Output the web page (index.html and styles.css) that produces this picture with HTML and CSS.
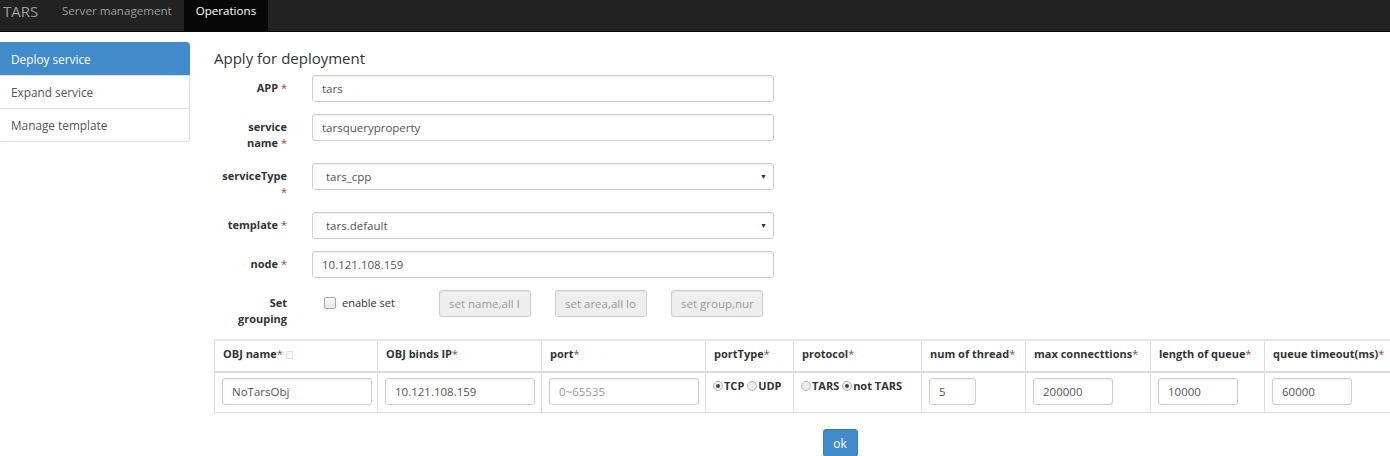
FILE: index.html
```html
<!DOCTYPE html>
<html>
<head>
<meta charset="utf-8">
<link rel="stylesheet" href="styles.css">
</head>
<body>
<div class="navbar">
  <span class="brand">TARS</span>
  <a class="nav-item">Server management</a>
  <a class="nav-item active">Operations</a>
</div>
<div class="main">
  <div class="sidebar">
    <div class="list-item active">Deploy service</div>
    <div class="list-item">Expand service</div>
    <div class="list-item">Manage template</div>
  </div>
  <div class="content">
    <h3 class="title">Apply for deployment</h3>
    <div class="form-row">
      <label class="label">APP <span class="req">*</span></label>
      <div class="field"><div class="input">tars</div></div>
    </div>
    <div class="form-row">
      <label class="label">service<br>name <span class="req">*</span></label>
      <div class="field"><div class="input">tarsqueryproperty</div></div>
    </div>
    <div class="form-row">
      <label class="label">serviceType<br><span class="req">*</span></label>
      <div class="field"><div class="input select">tars_cpp<span class="caret">▼</span></div></div>
    </div>
    <div class="form-row">
      <label class="label">template <span class="req">*</span></label>
      <div class="field"><div class="input select">tars.default<span class="caret">▼</span></div></div>
    </div>
    <div class="form-row">
      <label class="label">node <span class="req">*</span></label>
      <div class="field"><div class="input">10.121.108.159</div></div>
    </div>
    <div class="form-row">
      <label class="label">Set<br>grouping</label>
      <div class="field set-field">
        <span class="check-wrap"><span class="checkbox"></span>enable set</span>
        <div class="input disabled">set name,all l</div>
        <div class="input disabled">set area,all lo</div>
        <div class="input disabled">set group,nur</div>
      </div>
    </div>
    <div class="table-wrap">
      <table class="obj-table">
        <colgroup>
          <col style="width:163px"><col style="width:164px"><col style="width:164px"><col style="width:88px"><col style="width:128px"><col style="width:104px"><col style="width:125px"><col style="width:114px"><col style="width:202px">
        </colgroup>
        <thead>
          <tr>
            <th>OBJ name<span class="req">*</span> <span class="tiny-box"></span></th>
            <th>OBJ binds IP<span class="req">*</span></th>
            <th>port<span class="req">*</span></th>
            <th>portType<span class="req">*</span></th>
            <th>protocol<span class="req">*</span></th>
            <th>num of thread<span class="req">*</span></th>
            <th>max connecttions<span class="req">*</span></th>
            <th>length of queue<span class="req">*</span></th>
            <th>queue timeout(ms)<span class="req">*</span></th>
          </tr>
        </thead>
        <tbody>
          <tr>
            <td><div class="input cell-wide">NoTarsObj</div></td>
            <td><div class="input cell-wide">10.121.108.159</div></td>
            <td><div class="input cell-wide placeholder">0~65535</div></td>
            <td class="radio-cell"><span class="radio on"></span><b>TCP</b> <span class="radio"></span><b>UDP</b></td>
            <td class="radio-cell"><span class="radio"></span><b>TARS</b> <span class="radio on"></span><b>not TARS</b></td>
            <td><div class="input cell-xs">5</div></td>
            <td><div class="input cell-sm">200000</div></td>
            <td><div class="input cell-sm">10000</div></td>
            <td><div class="input cell-sm">60000</div></td>
          </tr>
        </tbody>
      </table>
      <div class="actions"><button class="btn-ok">ok</button></div>
    </div>
  </div>
</div>
</body>
</html>
```
FILE: styles.css
```css
html, body {
  margin: 0;
  padding: 0;
  overflow: hidden;
}
body {
  font-family: "Open Sans", "Noto Sans", sans-serif;
  font-size: 11px;
  color: #333;
  background: #fff;
  width: 1390px;
  height: 456px;
}
.navbar {
  height: 31px;
  background: #222;
  border-bottom: 1px solid #080808;
  display: flex;
  align-items: stretch;
}
.brand {
  font-size: 15px;
  line-height: 18px;
  color: #9d9d9d;
  padding: 2px 12px 0 3px;
  width: 35px;
  flex: 0 0 35px;
}
.nav-item {
  display: block;
  padding: 3px 12px 0;
  line-height: 16px;
  color: #9d9d9d;
  font-size: 11.6px;
}
.nav-item.active {
  background: #080808;
  color: #fff;
}
.main {
  display: flex;
  gap: 24px;
}
.sidebar {
  flex: 0 0 189px;
  width: 189px;
  margin-top: 10px;
  align-self: flex-start;
  border: 1px solid #ddd;
  border-left: none;
  border-radius: 0 4px 4px 0;
}
.list-item {
  height: 32px;
  line-height: 33px;
  padding-left: 11px;
  font-size: 11.8px;
  color: #555;
  border-top: 1px solid #ddd;
}
.list-item:first-child {
  border-top: none;
}
.list-item.active {
  background: #428bca;
  color: #fff;
  margin: -1px -1px 0 0;
  height: 33px;
  line-height: 34px;
  border-radius: 0 4px 0 0;
}
.content {
  flex: 1;
  min-width: 0;
  overflow: hidden;
}
.title {
  font-size: 15px;
  font-weight: normal;
  margin: 16px 0 7px 0;
  line-height: 20px;
  color: #333;
}
.form-row {
  display: flex;
  margin-bottom: 12px;
}
.label {
  width: 73px;
  flex: 0 0 73px;
  text-align: right;
  font-weight: bold;
  font-size: 11px;
  line-height: 16px;
  padding-top: 5px;
  color: #333;
}
.req {
  color: #a94442;
  font-weight: normal;
}
.field {
  margin-left: 25px;
  width: 462px;
}
.input {
  height: 25px;
  border: 1px solid #ccc;
  border-radius: 3px;
  line-height: 25px;
  padding: 0 9px;
  color: #555;
  font-size: 11.5px;
  box-shadow: inset 0 1px 1px rgba(0,0,0,.05);
  box-sizing: content-box;
  white-space: nowrap;
  overflow: hidden;
}
.field > .input {
  width: 442px;
}
.select {
  position: relative;
  padding-left: 13px;
  width: 438px !important;
}
.caret {
  position: absolute;
  right: 6px;
  top: 0;
  font-size: 7px;
  color: #333;
}
.set-field {
  display: flex;
  align-items: flex-start;
  width: auto;
}
.check-wrap {
  display: flex;
  align-items: center;
  width: 127px;
  flex: 0 0 127px;
  padding: 6px 0 0 12px;
  line-height: 14px;
  box-sizing: border-box;
  color: #333;
}
.checkbox {
  width: 10px;
  height: 10px;
  border: 1px solid #aaa;
  border-radius: 2px;
  background: linear-gradient(#fafafa, #e6e6e6);
  margin-right: 6px;
}
.set-field .input.disabled {
  width: 72px;
  flex: 0 0 72px;
  background: #eee;
  color: #999;
  margin-right: 24px;
}
.table-wrap {
  width: 1252px;
  margin-top: 1px;
}
.obj-table {
  width: 1252px;
  table-layout: fixed;
  border-collapse: collapse;
  border-top: 2px solid #e6e6e6;
}
.obj-table th, .obj-table td {
  border: 1px solid #ddd;
  text-align: left;
  vertical-align: top;
}
.obj-table th {
  font-size: 11px;
  padding: 5px 7px 9px 8px;
  line-height: 16px;
  border-bottom: 2px solid #ddd;
  white-space: nowrap;
  overflow: hidden;
}
.obj-table td {
  padding: 5px 7px 7px 7px;
  height: 27px;
}
.tiny-box {
  display: inline-block;
  width: 5px;
  height: 6px;
  border: 1px solid #f0d8de;
  vertical-align: -1px;
}
.cell-wide { width: 130px; }
.cell-xs { width: 27px; }
.cell-sm { width: 60px; }
.placeholder { color: #999; }
.radio-cell {
  font-size: 11px;
  line-height: 16px;
  white-space: nowrap;
}
.radio-cell b { color: #333; }
.radio {
  display: inline-block;
  width: 8px;
  height: 8px;
  border: 1px solid #b5b5b5;
  border-radius: 50%;
  background: #eee;
  margin-right: 1px;
  vertical-align: -1px;
  position: relative;
}
.radio.on::after {
  content: "";
  position: absolute;
  left: 2px;
  top: 2px;
  width: 4px;
  height: 4px;
  border-radius: 50%;
  background: #444;
}
.actions {
  display: flex;
  justify-content: center;
  margin-top: 16px;
}
.btn-ok {
  background: #428bca;
  border: 1px solid #357ebd;
  color: #fff;
  font-family: inherit;
  font-size: 12px;
  border-radius: 3px;
  width: 35px;
  height: 28px;
  padding: 0;
}
```
